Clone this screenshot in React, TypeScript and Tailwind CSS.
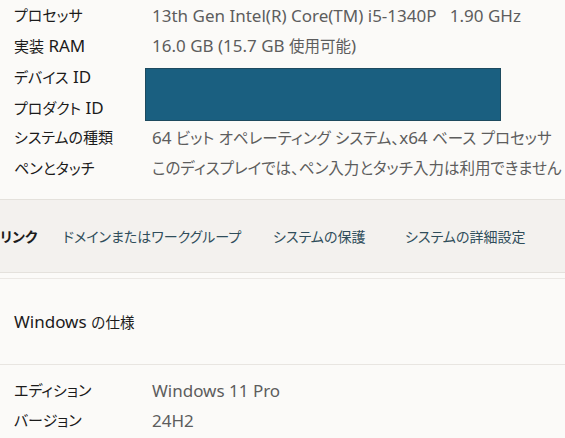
const FONT = { fontFamily: '"Noto Sans", "Noto Sans CJK JP", sans-serif' };

const specs: [string, string][] = [
  ['プロセッサ', '13th Gen Intel(R) Core(TM) i5-1340P   1.90 GHz'],
  ['実装 RAM', '16.0 GB (15.7 GB 使用可能)'],
  ['デバイス ID', ''],
  ['プロダクト ID', ''],
  ['システムの種類', '64 ビット オペレーティング システム、x64 ベース プロセッサ'],
  ['ペンとタッチ', 'このディスプレイでは、ペン入力とタッチ入力は利用できません'],
];

const winSpecs: [string, string][] = [
  ['エディション', 'Windows 11 Pro'],
  ['バージョン', '24H2'],
];

function Mixed({ text }: { text: string }) {
  return (
    <>
      {text.split(/([\x20-\x7E]+)/).map((part, i) =>
        /^[\x20-\x7E]+$/.test(part) ? (
          <span key={i} className="text-[17px]">
            {part}
          </span>
        ) : (
          <span key={i}>{part}</span>
        ),
      )}
    </>
  );
}

function Row({ label, value }: { label: string; value: string }) {
  return (
    <div className="flex h-[30.6px] items-center whitespace-pre leading-none [font-feature-settings:'palt']">
      <div className="w-[152px] shrink-0 pl-[14px] text-[15px] text-[#1b1b1b]">
        <Mixed text={label} />
      </div>
      <div className="text-[15.5px] text-[#5d5d5d]">
        <Mixed text={value} />
      </div>
    </div>
  );
}

export default function App() {
  return (
    <div className="h-[438px] w-[565px] overflow-hidden bg-[#fbfaf8]" style={FONT}>
      {/* device specs */}
      <div className="relative h-[199px]">
        {specs.map(([l, v]) => (
          <Row key={l} label={l} value={v} />
        ))}
        {/* redacted IDs */}
        <div className="absolute left-[145px] top-[68px] h-[53px] w-[356px] border border-[#1d4a5f] bg-[#1a5f80]" />
      </div>

      {/* related links */}
      <div className="flex h-[74px] items-center border-y border-[#e4e1dc] bg-[#f3f1ee] text-[14px] text-[#2f4d5a] [font-feature-settings:'palt']">
        <span className="w-[63px] font-semibold text-[#1b1b1b]">リンク</span>
        <span className="w-[210px]">ドメインまたはワークグループ</span>
        <span className="w-[132px]">システムの保護</span>
        <span>システムの詳細設定</span>
      </div>

      {/* windows specs */}
      <div className="mt-[5px] border-t border-[#ebe8e4]">
        <div className="flex h-[85px] items-center pl-[14px] text-[14.5px] text-[#1b1b1b]">
          <span>
            <Mixed text="Windows の仕様" />
          </span>
        </div>
        <div className="border-t border-[#e8e5e1] pt-[10px]">
          {winSpecs.map(([l, v]) => (
            <Row key={l} label={l} value={v} />
          ))}
        </div>
      </div>
    </div>
  );
}
